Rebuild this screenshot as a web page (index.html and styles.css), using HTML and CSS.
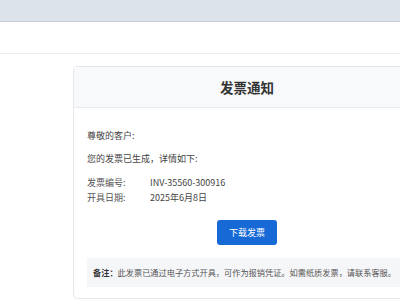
FILE: index.html
```html
<!DOCTYPE html>
<html lang="zh-CN">

<head>
  <meta charset="UTF-8">
  <meta name="viewport" content="width=device-width, initial-scale=1.0">
  <link rel="stylesheet" href="styles.css">
  <title>发票通知</title>
</head>

<body>
  <div class="topbar"></div>
  <div class="subbar"></div>

  <div class="page">
    <div class="card">
      <div class="card-header">
        <h1>发票通知</h1>
      </div>

      <div class="card-body">
        <p class="greet">尊敬的客户:</p>
        <p class="intro">您的发票已生成，详情如下:</p>

        <div class="info">
          <div class="row">
            <span class="label">发票编号:</span>
            <span class="value">INV-35560-300916</span>
          </div>
          <div class="row">
            <span class="label">开具日期:</span>
            <span class="value">2025年6月8日</span>
          </div>
        </div>

        <div class="actions">
          <button class="download">下载发票</button>
        </div>

        <div class="note">
          <strong>备注：</strong>此发票已通过电子方式开具，可作为报销凭证。如需纸质发票，请联系客服。
        </div>
      </div>
    </div>
  </div>
</body>

</html>
```

FILE: styles.css
```css
html,
body {
  overflow: hidden;
}

body {
  font-family: "Noto Sans CJK SC", "Noto Sans", sans-serif;
  background-color: #fff;
  margin: 0;
  padding: 0;
  color: #444;
}

.topbar {
  height: 21px;
  background-color: #dde3ea;
  border-bottom: 1px solid #c6cdd5;
}

.subbar {
  height: 31px;
  background-color: #fff;
  border-bottom: 1px solid #ebedf0;
}

.page {
  padding: 12px 0 0 73px;
}

.card {
  width: 346px;
  border: 1px solid #e6e8eb;
  border-radius: 4px;
  background-color: #fff;
}

.card-header {
  height: 40px;
  background-color: #f8f9fa;
  border-bottom: 1px solid #e9ecef;
  display: flex;
  align-items: center;
  justify-content: center;
}

.card-header h1 {
  margin: 0;
  font-size: 13.5px;
  font-weight: bold;
  color: #333;
}

.card-body {
  padding: 20px 13px 11px;
  font-size: 9px;
  line-height: 15px;
}

.card-body p {
  margin: 0;
}

.intro {
  margin-top: 8px !important;
}

.info {
  margin-top: 9px;
}

.row {
  display: flex;
}

.label {
  width: 63px;
  color: #555;
}

.actions {
  display: flex;
  justify-content: center;
  margin-top: 15px;
}

.download {
  width: 60px;
  height: 25px;
  border: none;
  border-radius: 3px;
  background-color: #1769d6;
  color: #fff;
  font-family: inherit;
  font-size: 9px;
  cursor: pointer;
}

.note {
  margin-top: 13px;
  padding: 7px 6px;
  background-color: #f5f6f8;
  font-size: 8.2px;
  line-height: 15px;
  color: #555;
  white-space: nowrap;
}

.note strong {
  color: #333;
}
```
